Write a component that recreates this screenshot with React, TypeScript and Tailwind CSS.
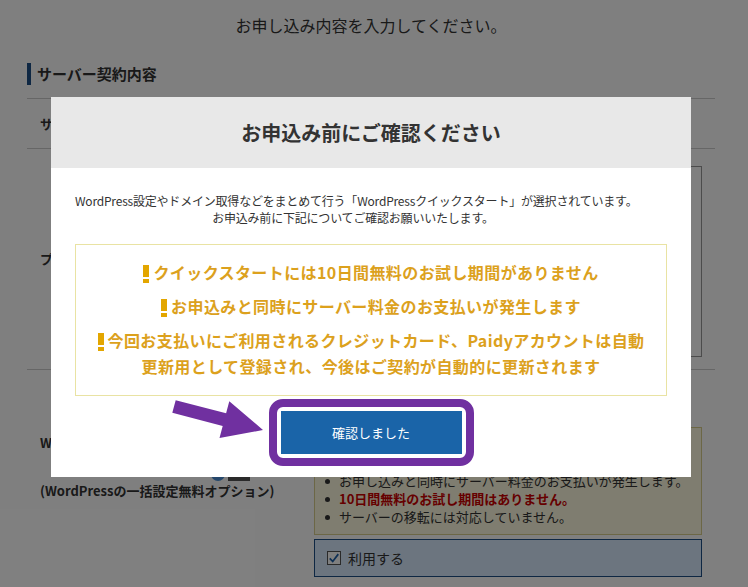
import React from 'react';

// Order form behind a confirmation modal, with a purple arrow + frame pointing at the button.

const notices = [
  'サーバー契約と同時にWordPressのインストールが完了します。',
  '独自ドメインの取得も同時に行います。',
  'お申し込みと同時にサーバー料金のお支払いが発生します。',
];

function Bang() {
  return (
    <span className="relative -top-[2px] mr-[4px] inline-flex flex-col align-baseline">
      <span className="h-[12px] w-[6px] bg-[#e3a600]" />
      <span className="mt-[2px] h-[4px] w-[6px] bg-[#e3a600]" />
    </span>
  );
}

export default function App() {
  return (
    <div className="relative h-[587px] w-[748px] overflow-hidden bg-white font-['Noto_Sans_CJK_JP','Noto_Sans',sans-serif] text-[#333]">
      {/* page under the overlay */}
      <div className="ml-[27px] w-[688px]">
        <h1 className="flex h-[50px] items-center justify-center text-[16px]">
          お申し込み内容を入力してください。
        </h1>
        <h2 className="mt-[13px] h-[22px] border-l-4 border-[#1d4f86] pl-[6px] text-[15px] font-bold leading-[22px]">
          サーバー契約内容
        </h2>

        <div className="mt-[13px] border-t border-[#cccccc]">
          <div className="grid h-[50px] grid-cols-[287px_388px] items-center border-b border-[#cccccc]">
            <div className="pl-[13px] text-[13px] font-bold">サーバーID</div>
            <div className="text-[13px]">xs123456</div>
          </div>

          <div className="grid h-[221px] grid-cols-[287px_388px] items-start border-b border-[#cccccc]">
            <div className="flex h-[220px] items-center pl-[13px] text-[13px] font-bold">プラン</div>
            <div className="pt-[17px]">
              <div className="flex h-[191px] flex-col gap-3 border border-[#999999] p-4 text-[13px]">
                <span>スタンダード</span>
                <span>プレミアム</span>
                <span>ビジネス</span>
              </div>
            </div>
          </div>

          <div className="grid grid-cols-[287px_388px]">
            <div className="pl-[13px] pt-[63px] text-[13px] font-bold">
              <div className="leading-[20px]">WordPress クイックスタート</div>
              <div className="flex h-[28px] items-end">
                <span className="ml-[171px] h-[14px] w-[14px] rounded-full bg-[#4a8fd6]" />
                <span className="ml-[3px] h-[14px] w-[22px] bg-[#555555]" />
              </div>
              <div className="leading-[20px]">(WordPressの一括設定無料オプション)</div>
            </div>
            <div className="pt-[57px]">
              <ul className="border border-[#d8cf8c] bg-[#fefae0] py-[8px] pl-[10px] text-[13px]">
                {notices.map((t) => (
                  <li key={t} className="flex h-[18px] items-center gap-[9px]">
                    <span className="h-[5px] w-[5px] rounded-full bg-[#333]" />
                    {t}
                  </li>
                ))}
                <li className="flex h-[18px] items-center gap-[9px] font-bold text-[#cc0000]">
                  <span className="h-[5px] w-[5px] rounded-full bg-[#333]" />
                  10日間無料のお試し期間はありません。
                </li>
                <li className="flex h-[18px] items-center gap-[9px]">
                  <span className="h-[5px] w-[5px] rounded-full bg-[#333]" />
                  サーバーの移転には対応していません。
                </li>
              </ul>
              <label className="mt-[4px] flex h-[38px] items-center gap-[7px] border border-[#1d4f86] bg-[#d8eaff] pl-[12px] text-[14px]">
                <span className="flex h-[14px] w-[14px] items-center justify-center border border-[#555] bg-white">
                  <svg viewBox="0 0 14 14" className="h-[12px] w-[12px]">
                    <path d="M2 7.5 L5.5 11 L12 2.5" fill="none" stroke="#1d5fa8" strokeWidth="2" />
                  </svg>
                </span>
                利用する
              </label>
            </div>
          </div>
        </div>
      </div>

      <div className="absolute inset-0 bg-black/50" />

      {/* modal */}
      <div className="absolute left-[51px] top-[97px] w-[640px] bg-white">
        <div className="flex h-[71px] items-center justify-center bg-[#e8e8e8] text-[20px] font-bold text-[#333]">
          お申込み前にご確認ください
        </div>
        <div className="px-[24px] pb-[11px] pt-[24px]">
          <p className="whitespace-nowrap pr-[36px] text-center text-[12px] leading-[17px] tracking-[-0.2px] text-[#333]">
            WordPress設定やドメイン取得などをまとめて行う「WordPressクイックスタート」が選択されています。
            <br />
            お申込み前に下記についてご確認お願いいたします。
          </p>
          <div className="mt-[18px] border border-[#e9e3a3] px-[10px] pb-[16px] pt-[14px] text-center text-[16px] font-bold leading-[26px] tracking-[0.4px] text-[#dca11d]">
            <p className="mb-[8px]">
              <Bang />
              クイックスタートには10日間無料のお試し期間がありません
            </p>
            <p className="mb-[8px]">
              <Bang />
              お申込みと同時にサーバー料金のお支払いが発生します
            </p>
            <p>
              <Bang />
              今回お支払いにご利用されるクレジットカード、Paidyアカウントは自動
              <br />
              更新用として登録され、今後はご契約が自動的に更新されます
            </p>
          </div>
          <div className="mt-[3px] flex justify-center">
            <div className="rounded-[14px] border-[8px] border-[#7030a0] p-[4px]">
              <button className="flex h-[43px] w-[181px] items-center justify-center bg-[#1a64a8] text-[13px] text-white">
                確認しました
              </button>
            </div>
          </div>
        </div>
      </div>

      {/* annotation arrow */}
      <svg className="absolute left-[160px] top-[390px]" width="110" height="55" viewBox="0 0 110 55">
        <polygon
          points="15.7,10.2 66.1,23.3 69.3,11.3 103,40 59.5,47.9 62.7,35.9 12.3,22.8"
          fill="#7030a0"
        />
      </svg>
    </div>
  );
}
